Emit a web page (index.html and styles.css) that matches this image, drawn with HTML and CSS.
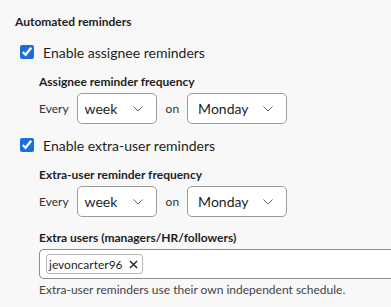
FILE: index.html
```html
<!DOCTYPE html>
<html lang="en">
<head>
    <meta charset="UTF-8">
    <title>Automated reminders</title>
    <link rel="stylesheet" href="styles.css">
</head>
<body>
    <div class="section">
        <div class="section-title">Automated reminders</div>

        <!-- assignee -->
        <label class="check-row">
            <input type="checkbox" checked>
            <span>Enable assignee reminders</span>
        </label>
        <div class="group">
            <div class="group-label">Assignee reminder frequency</div>
            <div class="freq-row">
                <span class="word">Every</span>
                <div class="select sel-unit">week <svg viewBox="0 0 10 6"><path d="M0.5 0.5l4.5 4.5 4.5-4.5"/></svg></div>
                <span class="word">on</span>
                <div class="select sel-day">Monday <svg viewBox="0 0 10 6"><path d="M0.5 0.5l4.5 4.5 4.5-4.5"/></svg></div>
            </div>
        </div>

        <!-- extra users -->
        <label class="check-row">
            <input type="checkbox" checked>
            <span>Enable extra-user reminders</span>
        </label>
        <div class="group">
            <div class="group-label">Extra-user reminder frequency</div>
            <div class="freq-row">
                <span class="word">Every</span>
                <div class="select sel-unit">week <svg viewBox="0 0 10 6"><path d="M0.5 0.5l4.5 4.5 4.5-4.5"/></svg></div>
                <span class="word">on</span>
                <div class="select sel-day">Monday <svg viewBox="0 0 10 6"><path d="M0.5 0.5l4.5 4.5 4.5-4.5"/></svg></div>
            </div>

            <div class="group-label">Extra users (managers/HR/followers)</div>
            <div class="tag-input">
                <span class="chip">jevoncarter96 <svg class="x" viewBox="0 0 10 10"><path d="M1 1l8 8M9 1l-8 8"/></svg></span>
            </div>
            <div class="hint">Extra-user reminders use their own independent schedule.</div>
        </div>
    </div>
</body>
</html>
```

FILE: styles.css
```css
body {
    margin: 0;
    background: #f8f8f8;
    font-family: Lato, "Noto Sans", sans-serif;
    color: #1e1e1e;
    overflow: hidden;
}
.section {
    padding: 13px 0 0 15px;
}
.section-title {
    font-size: 12px;
    font-weight: 700;
    line-height: 18px;
}
.check-row {
    display: flex;
    align-items: center;
    gap: 9px;
    margin: 13px 0 0 5px;
    font-size: 14px;
    height: 16px;
}
.check-row input {
    width: 14px;
    height: 14px;
    margin: 0;
    accent-color: #1a6fd8;
}
.group {
    padding-left: 24px;
}
.group-label {
    font-size: 12px;
    font-weight: 700;
    margin-top: 13px;
    line-height: 16px;
}
.check-row + .group .group-label:first-child {
    margin-top: 14px;
}
.freq-row {
    display: flex;
    align-items: center;
    margin-top: 3px;
    font-size: 12px;
}
.word {
    color: #333;
}
.select {
    box-sizing: border-box;
    height: 31px;
    border: 1px solid #9c9c9c;
    border-radius: 5px;
    background: #fff;
    display: flex;
    align-items: center;
    justify-content: space-between;
    padding: 0 13px 0 7px;
    font-size: 14px;
}
.select svg {
    width: 10px;
    height: 6px;
    fill: none;
    stroke: #666;
    stroke-width: 1;
}
.sel-unit {
    width: 80px;
    margin-left: 8px;
    margin-right: 9px;
}
.sel-day {
    width: 100px;
    padding-left: 10px;
    margin-left: 8px;
}
.tag-input {
    box-sizing: border-box;
    height: 30px;
    margin-top: 3px;
    border: 1px solid #8e8e8e;
    border-right: none;
    border-radius: 5px 0 0 5px;
    background: #fff;
    display: flex;
    align-items: center;
    padding-left: 6px;
}
.chip {
    box-sizing: border-box;
    height: 20px;
    display: flex;
    align-items: center;
    gap: 6px;
    border: 1px solid #b8b8b8;
    border-radius: 3px;
    padding: 0 4px 0 2px;
    font-size: 12px;
}
.chip .x {
    width: 9px;
    height: 9px;
    stroke: #222;
    stroke-width: 1.5;
}
.hint {
    font-size: 12px;
    line-height: 16px;
    color: #444;
    margin-top: 3px;
}
```
